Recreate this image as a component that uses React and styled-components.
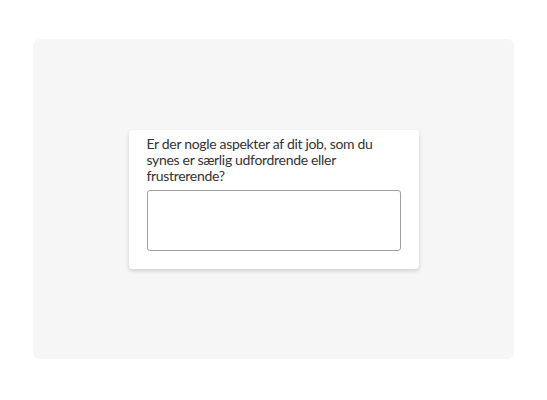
import React from 'react';
import styled, { createGlobalStyle } from 'styled-components';

const GlobalStyle = createGlobalStyle`
  html, body {
    margin: 0;
    padding: 0;
    background: #ffffff;
  }
  body {
    font-family: Lato, "Noto Sans", sans-serif;
  }
`;

const Page = styled.div`
  width: 547px;
  height: 400px;
  box-sizing: border-box;
  padding: 39px 33px 41px;
`;

const Panel = styled.div`
  height: 100%;
  background: #f6f6f6;
  border-radius: 7px;
  display: flex;
  align-items: center;
  justify-content: center;
`;

const Card = styled.div`
  width: 290px;
  box-sizing: border-box;
  background: #ffffff;
  border-radius: 4px;
  box-shadow: 0 2px 4px rgba(0, 0, 0, 0.16);
  padding: 6px 18px 18px;
  margin-top: 1px;
`;

const Question = styled.label`
  display: block;
  font-size: 14px;
  line-height: 16px;
  letter-spacing: -0.32px;
  color: #333333;
  margin: 0 0 6px;
`;

const Answer = styled.textarea`
  display: block;
  width: 100%;
  height: 61px;
  box-sizing: border-box;
  border: 1px solid #a0a0a0;
  border-radius: 3px;
  resize: none;
  background: #fff;
  outline: none;
  font: inherit;
`;

export default function App() {
  return (
    <>
      <GlobalStyle />
      <Page>
        <Panel>
          <Card>
            <Question>
              Er der nogle aspekter af dit job, som du synes er særlig udfordrende eller frustrerende?
            </Question>
            <Answer />
          </Card>
        </Panel>
      </Page>
    </>
  );
}
